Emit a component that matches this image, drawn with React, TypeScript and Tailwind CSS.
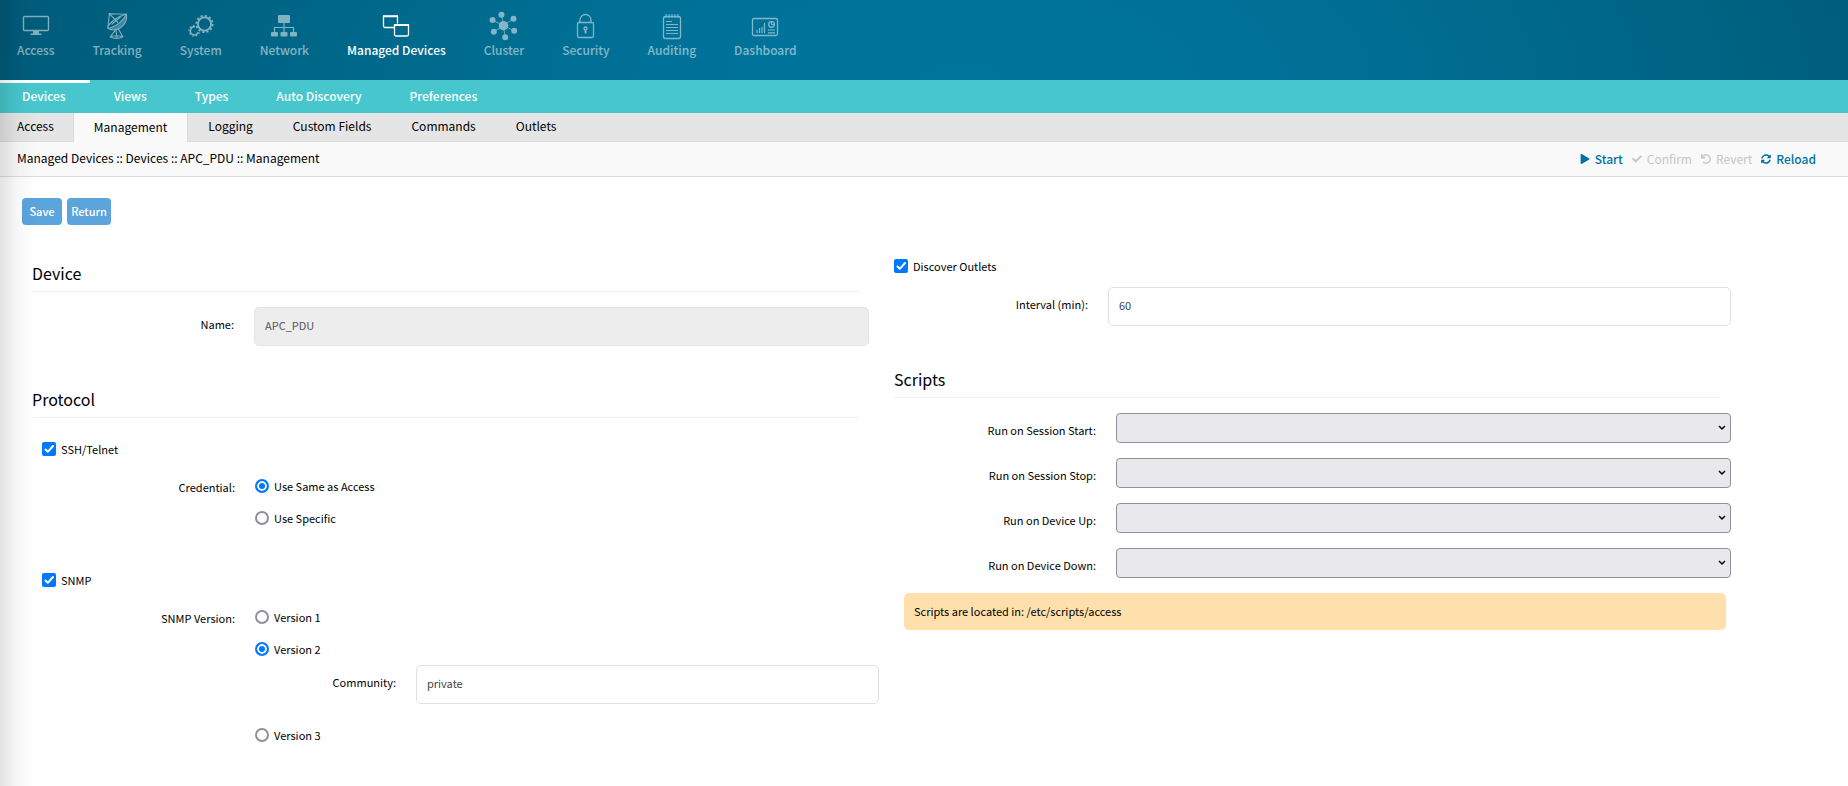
import { useState } from 'react';
import type { ReactNode } from 'react';
import { clsx } from 'clsx';
import { FaPlay, FaCheck, FaUndo, FaSyncAlt } from 'react-icons/fa';

const FONT = 'font-["Noto_Sans_CJK_SC","Noto_Sans",sans-serif]';

const MonitorIcon = () => (
  <svg width="32" height="32" viewBox="0 0 32 32" fill="none" stroke="currentColor" strokeWidth="1.4">
    <rect x="3.5" y="6.5" width="25" height="14" rx="1" />
    <path d="M13 21h6v2.500h2.500v1.500h-11v-1.500H13z" fill="currentColor" stroke="none" />
  </svg>
);

const DishIcon = () => (
  <svg width="32" height="32" viewBox="0 0 32 32" fill="none" stroke="currentColor" strokeWidth="1.1" strokeLinejoin="round">
    <path d="M25.500 4C18 6 9 11.500 6.500 17.500" />
    <path d="M25.500 4c.8 6-2 11-6 13.800-4 2.600-9.500 3.200-13 0 1 .4 2.500.2 4-.4C16.500 15 22.500 10 25.500 4z" fill="currentColor" fillOpacity="0.5" />
    <path d="M8.500 3.800L25 4.300M8.500 3.800L7 16.500M8.500 3.800l8.500 8.700M10.500 14.500L20 6.500" />
    <circle cx="8.500" cy="3.800" r="1" fill="currentColor" stroke="none" />
    <path d="M14.500 20.200L9 27M17.500 19.200L22 27M15 20.200l1 7.800M9 27c3.500 1.800 9.500 1.800 13 0M9 27c3.500-1.300 9.500-1.300 13 0" />
  </svg>
);

const GearsIcon = () => (
  <svg width="32" height="32" viewBox="0 0 32 32" fill="none" stroke="currentColor">
    <circle cx="19.500" cy="14" r="6.600" strokeWidth="1.900" />
    <circle cx="19.500" cy="14" r="8.100" strokeWidth="2" strokeDasharray="2.200 2.040" />
    <path d="M10 16.900a4 4 0 1 0 3.200 5.200" strokeWidth="1.500" />
    <path d="M9.500 15.600a5.200 5.200 0 1 0 4.800 6.800" strokeWidth="1.500" strokeDasharray="1.500 2" />
  </svg>
);

const NetworkIcon = () => (
  <svg width="32" height="32" viewBox="0 0 32 32" fill="currentColor">
    <rect x="10" y="5" width="12" height="8" rx="1" />
    <rect x="3" y="22" width="7" height="4.500" rx="1" />
    <rect x="12.500" y="22" width="7" height="4.500" rx="1" />
    <rect x="22" y="22" width="7" height="4.500" rx="1" />
    <path d="M16 13v9M6.500 22v-4.500h19V22" fill="none" stroke="currentColor" strokeWidth="1.200" />
  </svg>
);

const WindowsIcon = () => (
  <svg width="32" height="32" viewBox="0 0 32 32" fill="none" stroke="currentColor" strokeWidth="1.300">
    <path d="M14.500 17.500H5a1.500 1.500 0 0 1-1.500-1.500V6.500h14v7" />
    <path d="M3 6.200h15M14 15.200h15" strokeWidth="1.800" />
    <path d="M14.500 15h14v9.500a1.500 1.500 0 0 1-1.500 1.500H16a1.500 1.500 0 0 1-1.500-1.500z" />
  </svg>
);

const ClusterIcon = () => (
  <svg width="32" height="32" viewBox="0 0 32 32" fill="currentColor">
    <path d="M15.500 15.700l-2-11M15.500 15.700l10-7M15.500 15.700l10.700 5M15.500 15.700l1.700 11.600M15.500 15.700l-9.700 6M15.500 15.700L4.500 10" stroke="currentColor" strokeWidth="0.8" />
    <circle cx="15.500" cy="15.700" r="4.800" />
    <circle cx="13.500" cy="4.700" r="3" />
    <circle cx="25.500" cy="8.700" r="3" />
    <circle cx="26.200" cy="20.700" r="3" />
    <circle cx="17.200" cy="27.300" r="3" />
    <circle cx="5.800" cy="21.700" r="3" />
    <circle cx="4.500" cy="10" r="3" />
  </svg>
);

const LockIcon = () => (
  <svg width="32" height="32" viewBox="0 0 32 32" fill="none" stroke="currentColor" strokeWidth="1.300">
    <rect x="7.500" y="12.500" width="16" height="15" rx="1.500" />
    <path d="M10 12.500V10a5.500 5.500 0 0 1 11 0v2.500" />
    <circle cx="15.500" cy="18.500" r="1.500" />
    <path d="M15.500 20v3.500" strokeWidth="2" />
  </svg>
);

const NotepadIcon = () => (
  <svg width="32" height="32" viewBox="0 0 32 32" fill="none" stroke="currentColor" strokeWidth="1.300">
    <rect x="7.500" y="6.500" width="17" height="22" rx="2" />
    <path d="M10 4v4M13 4v4M16 4v4M19 4v4M22 4v4" strokeWidth="1" />
    <path d="M10 11.500h6M10 14.500h12M10 17.500h12M10 20.500h12M10 23.500h12" strokeWidth="1.200" />
  </svg>
);

const DashboardIcon = () => (
  <svg width="32" height="32" viewBox="0 0 32 32" fill="none" stroke="currentColor" strokeWidth="1.300">
    <rect x="3.500" y="8.500" width="25" height="17" rx="1.500" />
    <path d="M8 23v-3M10.500 23v-5M13 23v-6M15.500 23v-10" strokeWidth="1.200" />
    <circle cx="22.500" cy="14.500" r="2.800" />
    <path d="M22.500 14.500V11.500M22.500 14.500h3M19 20h7M19 22.800h7" strokeWidth="1.200" />
  </svg>
);

const NAV: { label: string; icon: () => ReactNode }[] = [
  { label: 'Access', icon: MonitorIcon },
  { label: 'Tracking', icon: DishIcon },
  { label: 'System', icon: GearsIcon },
  { label: 'Network', icon: NetworkIcon },
  { label: 'Managed Devices', icon: WindowsIcon },
  { label: 'Cluster', icon: ClusterIcon },
  { label: 'Security', icon: LockIcon },
  { label: 'Auditing', icon: NotepadIcon },
  { label: 'Dashboard', icon: DashboardIcon },
];

const SUB_NAV = ['Devices', 'Views', 'Types', 'Auto Discovery', 'Preferences'];
const TABS = ['Access', 'Management', 'Logging', 'Custom Fields', 'Commands', 'Outlets'];

const SCRIPTS = [
  { id: 'session-start', label: 'Run on Session Start:' },
  { id: 'session-stop', label: 'Run on Session Stop:' },
  { id: 'device-up', label: 'Run on Device Up:' },
  { id: 'device-down', label: 'Run on Device Down:' },
];

function SectionTitle({ children }: { children: ReactNode }) {
  return (
    <h2 className="mr-[10px] border-b border-[#f1f1f1] pb-[10px] text-base leading-4 font-normal">{children}</h2>
  );
}

function Check({ id, label }: { id: string; label: string }) {
  const [checked, setChecked] = useState(true);
  return (
    <label htmlFor={id} className="flex h-[14px] w-fit items-center gap-[5px]">
      <span className="relative flex size-[14px]">
        <input
          id={id}
          type="checkbox"
          checked={checked}
          onChange={e => setChecked(e.target.checked)}
          className="peer size-[14px] appearance-none rounded-xs border-2 border-[#8f8f9d] bg-white checked:border-[#0079ff] checked:bg-[#0079ff]"
        />
        <svg viewBox="0 0 14 14" className="pointer-events-none absolute inset-0 hidden peer-checked:block" fill="none" stroke="white" strokeWidth="2" strokeLinecap="round" strokeLinejoin="round">
          <path d="M3.500 7.500l2.300 2.300L11 4" />
        </svg>
      </span>
      {label}
    </label>
  );
}

interface RadioProps {
  name: string;
  label: string;
  value: string;
  onSelect: (v: string) => void;
}

function Radio({ name, label, value, onSelect }: RadioProps) {
  return (
    <label className="flex h-8 w-fit items-center gap-[5px]">
      <input
        type="radio"
        name={name}
        checked={value === label}
        onChange={() => onSelect(label)}
        className="size-[14px] appearance-none rounded-full border-2 border-[#8f8f9d] bg-white checked:border-[#0079ff] checked:bg-[#0079ff] checked:shadow-[inset_0_0_0_2px_white]"
      />
      {label}
    </label>
  );
}

export default function App() {
  const [credential, setCredential] = useState('Use Same as Access');
  const [version, setVersion] = useState('Version 2');

  return (
    <div className={clsx(FONT, 'relative min-h-screen bg-white text-[11px] leading-4 text-black')}>
      {/* Main navigation */}
      <nav className="flex h-20 items-start gap-1 bg-[radial-gradient(62%_600%_at_52%_100%,#00769d_0%,#007299_25%,#006484_65%,#005370_100%)]">
        {NAV.map(({ label, icon: Icon }) => (
          <a
            key={label}
            href="#"
            className={clsx(
              'flex flex-col items-center px-[17px] pt-[10px] text-xs leading-4 font-medium text-white',
              label !== 'Managed Devices' && 'opacity-50'
            )}
          >
            <Icon />
            <span>{label}</span>
          </a>
        ))}
      </nav>

      <nav className="flex h-[33px] bg-[#47c7cd] text-xs font-medium text-white">
        {SUB_NAV.map((label, i) => (
          <a
            key={label}
            href="#"
            className={clsx('flex items-center border-t-[3px] px-6 pb-[5px] first:pl-[22px]', i === 0 ? 'border-white' : 'border-transparent')}
          >
            {label}
          </a>
        ))}
      </nav>

      <nav className="flex h-[29px] items-stretch border-b border-[#dcdcdc] bg-[#e5e5e5] text-xs">
        {TABS.map(label => (
          <a
            key={label}
            href="#"
            className={clsx(
              'flex items-center px-5 pb-[2px] first:pr-[19px] first:pl-[17px]',
              label === 'Management' && '-mb-px border-x border-[#dcdcdc] bg-[#f9f9f9]'
            )}
          >
            {label}
          </a>
        ))}
      </nav>

      <div className="flex h-[35px] items-center justify-between border-b border-[#dcdcdc] bg-[#f9f9f9] pr-8 pl-[17px] text-xs">
        <span className="pb-[2px]">Managed Devices :: Devices :: APC_PDU :: Management</span>
        <div className="flex items-center gap-[9px] font-medium text-[#0072a3]">
          <button className="flex items-center gap-[5px]"><FaPlay size={10} />Start</button>
          <button disabled className="flex items-center gap-[5px] font-normal text-[#c6c6c6]"><FaCheck size={10} />Confirm</button>
          <button disabled className="flex items-center gap-[5px] font-normal text-[#c6c6c6]"><FaUndo size={10} />Revert</button>
          <button className="flex items-center gap-[5px]"><FaSyncAlt size={10} />Reload</button>
        </div>
      </div>

      <main className="pt-[21px] pb-6">
        <div className="flex gap-[5px] pl-[22px] font-medium text-white">
          <button className="h-[27px] w-10 rounded-[4px] bg-[#5ba4dc] pb-px">Save</button>
          <button className="h-[27px] w-11 rounded-[4px] bg-[#5ba4dc] pb-px">Return</button>
        </div>

        <div className="flex gap-[25px] pr-[117px] pl-8">
          {/* Left column */}
          <div className="min-w-0 flex-1 pt-10">
            <SectionTitle>Device</SectionTitle>
            <div className="mt-[15px] flex items-center">
              <label htmlFor="name" className="w-[202px] pb-[5px] text-right">Name:</label>
              <input id="name" readOnly value="APC_PDU" className="ml-5 h-[39px] min-w-0 flex-1 rounded-[5px] border border-[#e4e4e4] bg-[#ededed] px-[10px] pb-[3px] text-[#555]" />
            </div>

            <div className="mt-[45px]">
              <SectionTitle>Protocol</SectionTitle>
            </div>
            <div className="mt-6 pl-[10px]">
              <Check id="ssh" label="SSH/Telnet" />
              <div role="radiogroup" aria-labelledby="credential-label" className="mt-[14px] flex">
                <span id="credential-label" className="w-[193px] pt-[9px] text-right">Credential:</span>
                <div className="ml-5">
                  <Radio name="credential" label="Use Same as Access" value={credential} onSelect={setCredential} />
                  <Radio name="credential" label="Use Specific" value={credential} onSelect={setCredential} />
                </div>
              </div>

              <div className="mt-[39px]">
                <Check id="snmp" label="SNMP" />
              </div>
              <div role="radiogroup" aria-labelledby="snmp-version-label" className="mt-[14px] flex">
                <span id="snmp-version-label" className="w-[193px] pt-[9px] text-right">SNMP Version:</span>
                <div className="ml-5 min-w-0 flex-1">
                  <Radio name="snmp-version" label="Version 1" value={version} onSelect={setVersion} />
                  <Radio name="snmp-version" label="Version 2" value={version} onSelect={setVersion} />
                  <div className="-mr-[10px] mb-[15px] flex items-center">
                    <label htmlFor="community" className="w-[141px] pb-[5px] text-right">Community:</label>
                    <input id="community" defaultValue="private" className="ml-5 h-[39px] min-w-0 flex-1 rounded-[5px] border border-[#e0e0e0] px-[10px] pb-[3px] text-[#444]" />
                  </div>
                  <Radio name="snmp-version" label="Version 3" value={version} onSelect={setVersion} />
                </div>
              </div>
            </div>
          </div>

          {/* Right column */}
          <div className="min-w-0 flex-1 pt-[34px]">
            <Check id="discover" label="Discover Outlets" />
            <div className="mt-[14px] flex items-center">
              <label htmlFor="interval" className="w-[194px] pb-[5px] text-right">Interval (min):</label>
              <input id="interval" defaultValue="60" className="ml-5 h-[39px] min-w-0 flex-1 rounded-[5px] border border-[#e0e0e0] px-[10px] pb-[3px] text-[#444]" />
            </div>

            <div className="mt-[45px]">
              <SectionTitle>Scripts</SectionTitle>
            </div>
            <div className="mt-[15px] flex flex-col gap-[15px]">
              {SCRIPTS.map(s => (
                <div key={s.id} className="flex">
                  <label htmlFor={s.id} className="w-[202px] pt-[9px] text-right">{s.label}</label>
                  <div className="relative ml-5 flex-1">
                    <select id={s.id} className="block h-[30px] w-full appearance-none rounded-[4px] border border-[#8f8f9d] bg-[#e9e9ed]" />
                    <svg viewBox="0 0 8 6" className="pointer-events-none absolute top-3 right-[5px] h-[6px] w-2" fill="none" stroke="black" strokeWidth="1.500">
                      <path d="M1 1l3 3 3-3" />
                    </svg>
                  </div>
                </div>
              ))}
            </div>
            <p className="mt-[15px] mr-[5px] ml-[10px] rounded-[5px] bg-[#ffe0ac] px-[10px] py-[10px] leading-[17px]">
              Scripts are located in: /etc/scripts/access
            </p>
          </div>
        </div>
      </main>

      {/* Shade along the window's left edge */}
      <div className="pointer-events-none absolute inset-y-0 left-0 w-9 bg-linear-to-r from-black/11 via-black/3 to-transparent" />
    </div>
  );
}
